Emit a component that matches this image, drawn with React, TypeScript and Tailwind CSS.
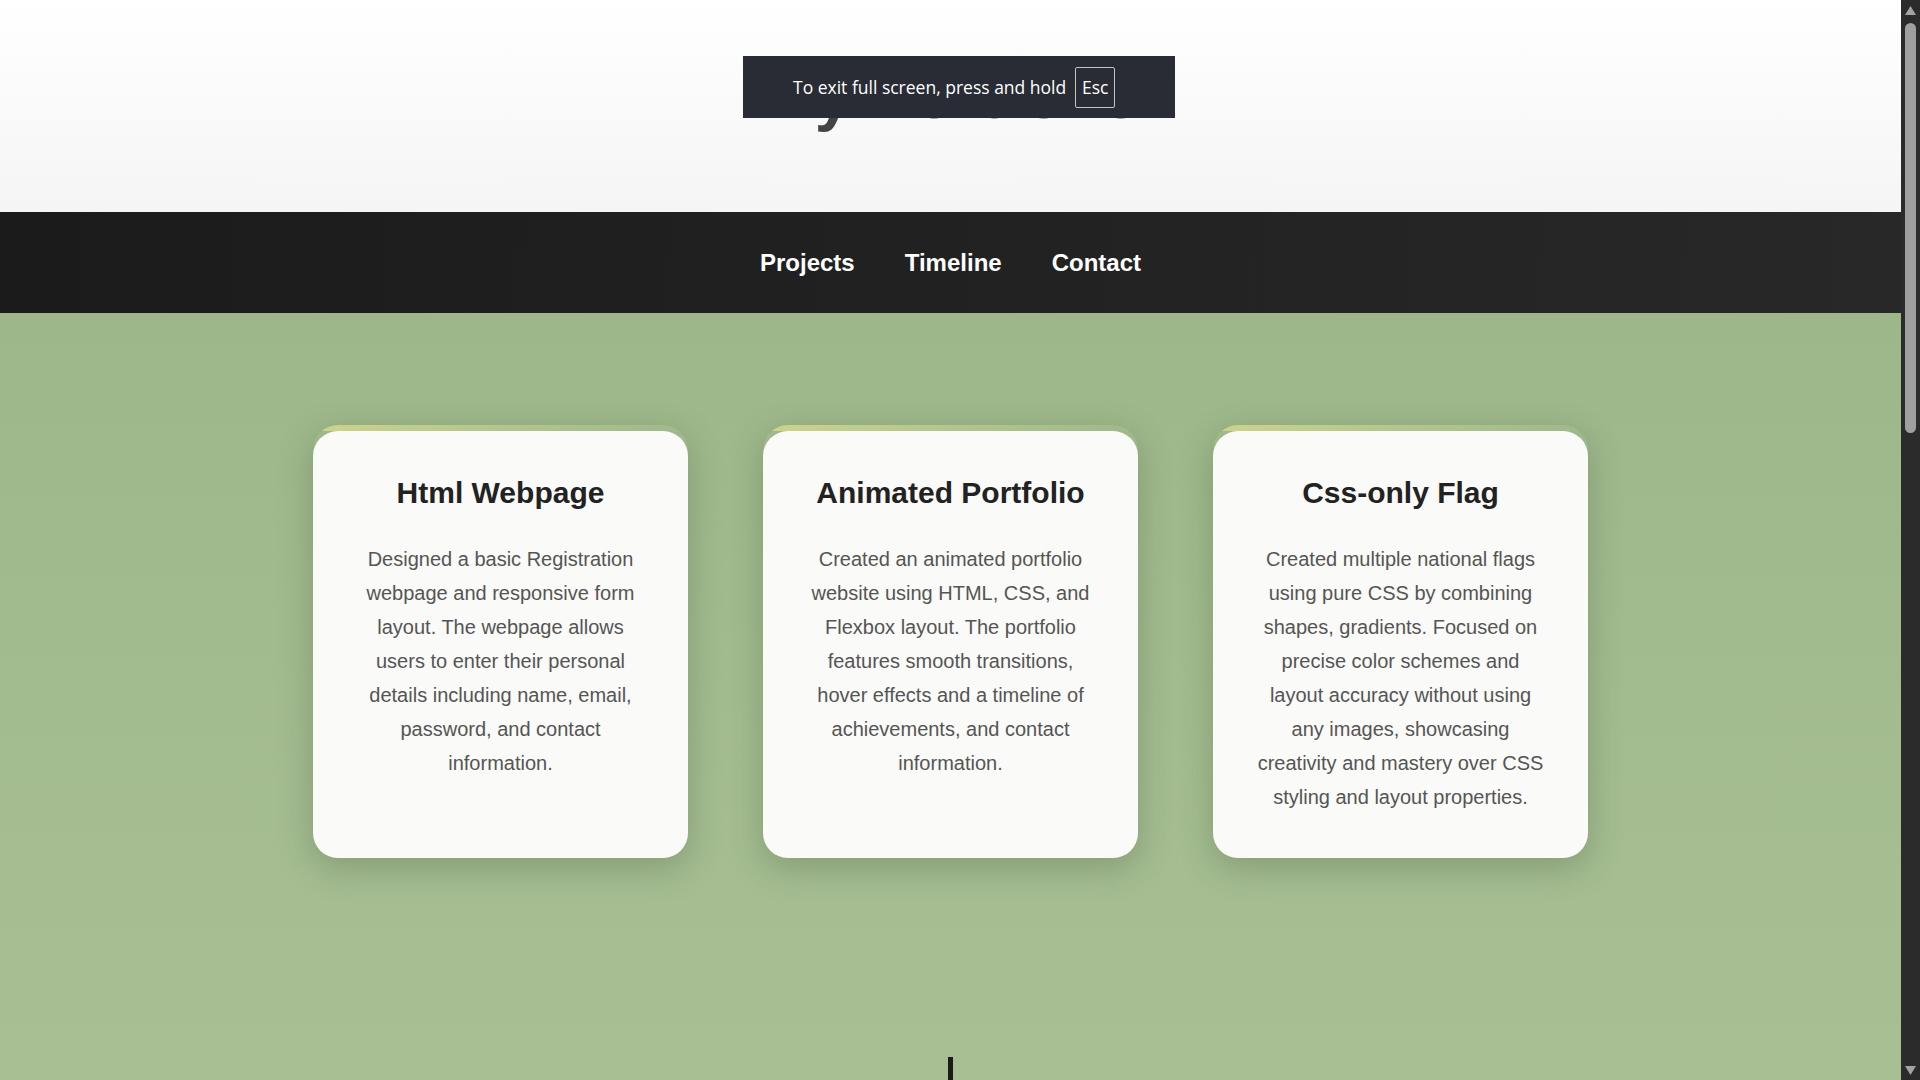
import React from "react";

const projects = [
  {
    title: "Html Webpage",
    text: "Designed a basic Registration webpage and responsive form layout. The webpage allows users to enter their personal details including name, email, password, and contact information.",
  },
  {
    title: "Animated Portfolio",
    text: "Created an animated portfolio website using HTML, CSS, and Flexbox layout. The portfolio features smooth transitions, hover effects and a timeline of achievements, and contact information.",
  },
  {
    title: "Css-only Flag",
    text: "Created multiple national flags using pure CSS by combining shapes, gradients. Focused on precise color schemes and layout accuracy without using any images, showcasing creativity and mastery over CSS styling and layout properties.",
  },
];

function ProjectCard({ title, text }: { title: string; text: string }) {
  return (
    <div className="flex flex-col rounded-[25px] overflow-hidden shadow-[0_10px_34px_rgba(40,60,30,0.25)]">
      <div className="h-[6px] shrink-0 bg-gradient-to-r from-[#cdd48a] via-[#bccb8e]/70 to-transparent" />
      <div className="flex-1 bg-[#fafaf8] rounded-t-[25px] px-[40px] pt-[44px] pb-[44px] text-center">
        <h3 className="text-[30px] leading-[36px] font-bold text-[#222] mb-[31px]">{title}</h3>
        <p className="text-[20px] leading-[34px] text-[#555]">{text}</p>
      </div>
    </div>
  );
}

function Scrollbar() {
  return (
    <div className="w-[19px] shrink-0 bg-[#2b2b2b] flex flex-col items-center">
      <svg width="11" height="9" viewBox="0 0 11 9" className="mt-[6px]">
        <path d="M5.5 0 L11 9 L0 9 Z" fill="#a3a3a3" />
      </svg>
      <div className="mt-[8px] w-[11px] h-[410px] rounded-full bg-[#9f9f9f]" />
      <div className="flex-1" />
      <svg width="11" height="9" viewBox="0 0 11 9" className="mb-[5px]">
        <path d="M0 0 L11 0 L5.5 9 Z" fill="#a3a3a3" />
      </svg>
    </div>
  );
}

export default function App() {
  return (
    <div className="relative flex h-[1080px] w-full overflow-hidden font-['Liberation_Sans',Arial,sans-serif]">
      <div className="flex-1 min-w-0 flex flex-col">
        <header className="h-[212px] shrink-0 bg-gradient-to-b from-white to-[#f5f5f5] pt-[62px] text-center">
          <h1 className="text-[66px] leading-none font-bold text-[#444]">My Portfolio</h1>
        </header>

        <nav className="h-[101px] shrink-0 flex items-center justify-center gap-[50px] bg-gradient-to-r from-[#1b1b1b] to-[#282828]">
          <a href="#projects" className="text-[24px] font-bold text-white">Projects</a>
          <a href="#timeline" className="text-[24px] font-bold text-white">Timeline</a>
          <a href="#contact" className="text-[24px] font-bold text-white">Contact</a>
        </nav>

        <main className="flex-1 flex flex-col items-center bg-gradient-to-b from-[#9db78a] to-[#a8bf94]">
          <section id="projects" className="pt-[112px] grid grid-cols-[375px_375px_375px] gap-[75px]">
            {projects.map((p) => (
              <ProjectCard key={p.title} title={p.title} text={p.text} />
            ))}
          </section>
          <section id="timeline" className="mt-[199px] flex-1 flex justify-center">
            <div className="w-[5px] bg-[#1b1b1b]" />
          </section>
        </main>
      </div>

      <Scrollbar />

      {/* browser fullscreen notice */}
      <div className="absolute left-[743px] top-[56px] w-[432px] h-[62px] bg-[#292c34] flex items-center pl-[50px] font-['Open_Sans',sans-serif] text-white">
        <span className="text-[17.5px]">To exit full screen, press and hold</span>
        <span className="ml-[9px] w-[40px] h-[41px] border border-[#c4c4c4] rounded-[2px] flex items-center justify-center text-[17.5px]">
          Esc
        </span>
      </div>
    </div>
  );
}
